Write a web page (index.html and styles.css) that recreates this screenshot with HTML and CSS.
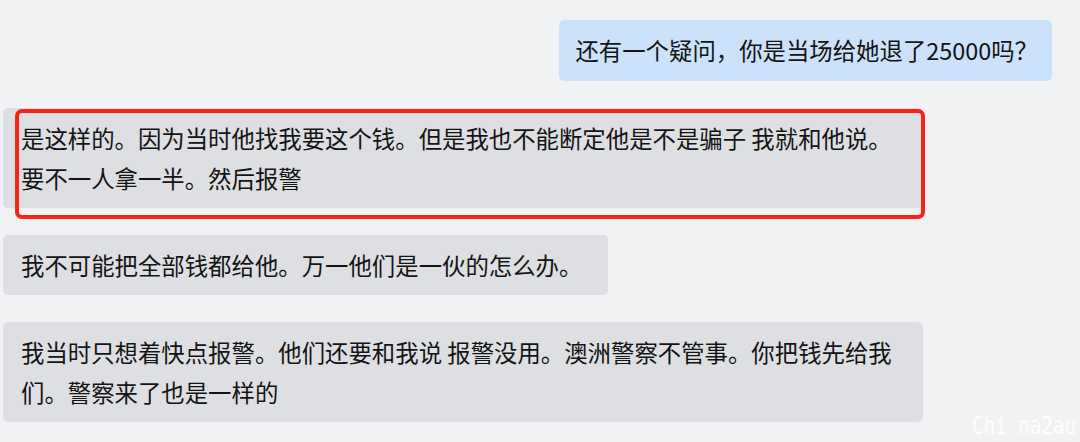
FILE: index.html
```html
<!DOCTYPE html>
<html lang="zh-CN">
<head>
    <meta charset="UTF-8">
    <meta name="viewport" content="width=device-width, initial-scale=1.0">
    <title>聊天记录</title>
    <link rel="stylesheet" href="styles.css">
</head>
<body>
    <!-- Chat log -->
    <div class="chat">
        <div class="bubble bubble-me">还有一个疑问，你是当场给她退了25000吗？</div>

        <div class="bubble bubble-them marked">
            是这样的。因为当时他找我要这个钱。但是我也不能断定他是不是骗子 我就和他说。要不一人拿一半。然后报警
            <span class="highlight"></span>
        </div>

        <div class="bubble bubble-them">我不可能把全部钱都给他。万一他们是一伙的怎么办。</div>

        <div class="bubble bubble-them">我当时只想着快点报警。他们还要和我说 报警没用。澳洲警察不管事。你把钱先给我们。警察来了也是一样的</div>
    </div>

    <div class="watermark">Chi na2au</div>
</body>
</html>
```

FILE: styles.css
```css
/* Page */
body {
    margin: 0;
    background-color: #f1f2f4;
    font-family: "Noto Sans CJK SC", "Noto Sans", sans-serif;
    color: #141414;
    height: 442px;
    overflow: hidden;
    position: relative;
}

/* Message column */
.chat {
    display: flex;
    flex-direction: column;
    align-items: flex-start;
    gap: 27px;
    padding-top: 20px;
}

/* Shared bubble */
.bubble {
    font-size: 23.4px;
    line-height: 40px;
    border-radius: 5px;
    box-sizing: border-box;
}

/* Sent message */
.bubble-me {
    align-self: flex-end;
    margin-right: 28px;
    background-color: #cce2fa;
    padding: 10px 14px 11px 16px;
}

/* Received messages */
.bubble-them {
    margin-left: 3px;
    max-width: 920px;
    background-color: #dedfe3;
    padding: 10px 26px 10px 18px;
}

.marked {
    position: relative;
}

/* Red annotation frame drawn over the bubble */
.highlight {
    position: absolute;
    left: 12px;
    top: 1px;
    width: 910px;
    height: 110px;
    box-sizing: border-box;
    border: 4px solid #fa2116;
    border-radius: 7px;
}

/* Corner watermark */
.watermark {
    position: absolute;
    right: 4px;
    bottom: 2px;
    font-family: "DejaVu Sans Mono", monospace;
    font-size: 24px;
    color: rgba(255, 255, 255, 0.9);
    transform: scaleX(0.8);
    transform-origin: right bottom;
}
```
